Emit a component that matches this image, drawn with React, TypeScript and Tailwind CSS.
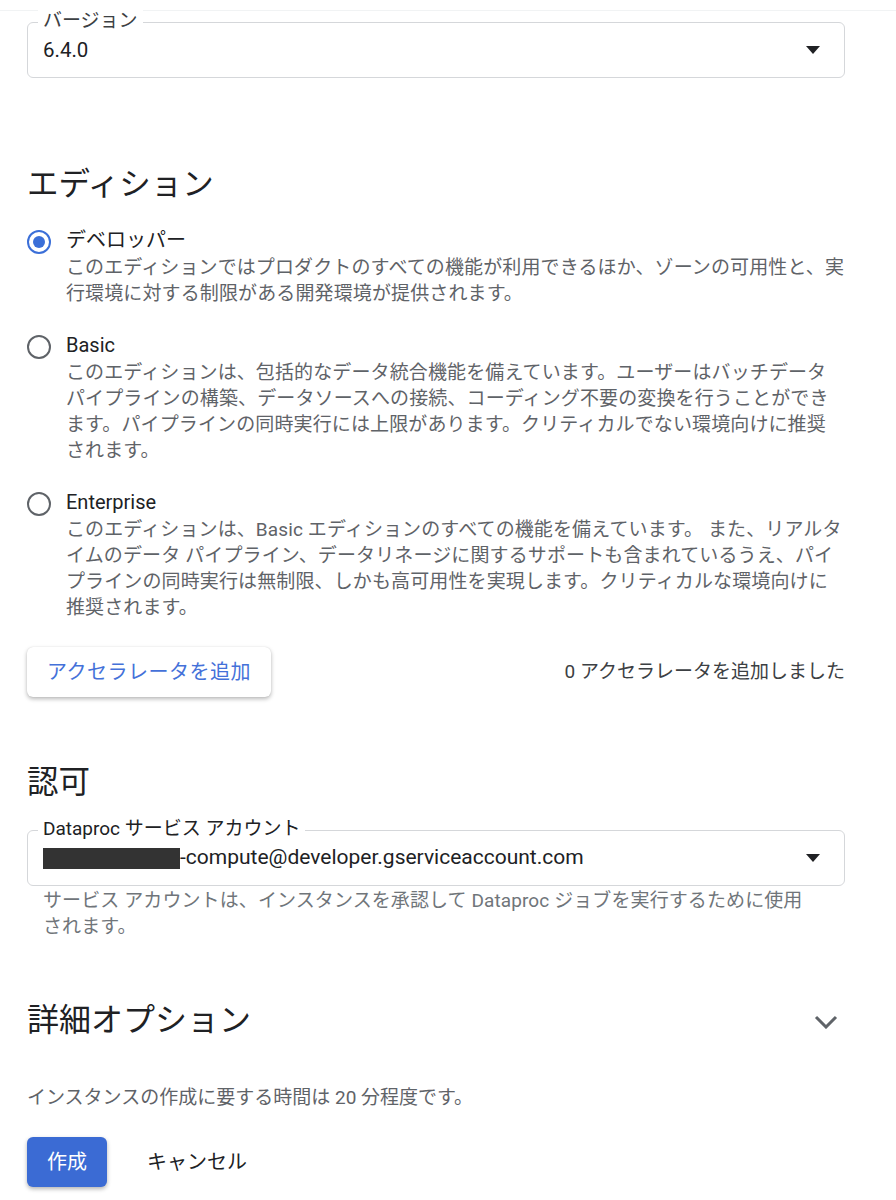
import React from "react";

const FONT = { fontFamily: 'Roboto, "Noto Sans CJK JP", sans-serif' };

function Radio({ checked }: { checked?: boolean }) {
  return (
    <div
      className={
        "w-[24px] h-[24px] rounded-full border-[2.5px] flex items-center justify-center shrink-0 " +
        (checked ? "border-[#3b6fd8]" : "border-[#5f6368]")
      }
    >
      {checked && <div className="w-[12px] h-[12px] rounded-full bg-[#3b6fd8]" />}
    </div>
  );
}

function Option({
  label,
  lines,
  checked,
  className,
}: {
  label: string;
  lines: string[];
  checked?: boolean;
  className?: string;
}) {
  return (
    <div className={"flex " + (className ?? "")}>
      <div className="w-[39px] shrink-0 h-[30px] flex items-center">
        <Radio checked={checked} />
      </div>
      <div className="flex-1">
        <div className="text-[20px] leading-[26px] text-[#202124]">{label}</div>
        <div className="mt-[2px] text-[19px] leading-[26px] tracking-[0.12px] text-[#5f6368] whitespace-nowrap">
          {lines.map((l, i) => (
            <div key={i}>{l}</div>
          ))}
        </div>
      </div>
    </div>
  );
}

function Triangle() {
  return (
    <svg width="14" height="8" viewBox="0 0 14 8" className="shrink-0">
      <path d="M0 0 L14 0 L7 8 Z" fill="#202124" />
    </svg>
  );
}

export default function App() {
  return (
    <div className="bg-white w-[896px] h-[1200px] overflow-hidden" style={FONT}>
      <div className="h-[11px] border-b border-[#f1f3f4]" />
      <div className="pl-[27px] pr-[51px]">
        {/* Version select */}
        <div className="relative mt-[11px] h-[56px] border border-[#d5d7da] rounded-[6px] flex items-center pl-[15px] pr-[24px] justify-between">
          <span className="absolute left-[10px] top-[-15px] bg-white px-[5px] text-[19px] leading-[26px] text-[#3c4043]">
            バージョン
          </span>
          <span className="text-[20.5px] text-[#202124]">6.4.0</span>
          <Triangle />
        </div>

        {/* Edition */}
        <h2 className="mt-[89px] text-[31.5px] leading-[36px] font-normal text-[#202124]">エディション</h2>

        <Option
          className="mt-[24px]"
          checked
          label="デベロッパー"
          lines={[
            "このエディションではプロダクトのすべての機能が利用できるほか、ゾーンの可用性と、実",
            "行環境に対する制限がある開発環境が提供されます。",
          ]}
        />
        <Option
          className="mt-[25px]"
          label="Basic"
          lines={[
            "このエディションは、包括的なデータ統合機能を備えています。ユーザーはバッチデータ",
            "パイプラインの構築、データソースへの接続、コーディング不要の変換を行うことができ",
            "ます。パイプラインの同時実行には上限があります。クリティカルでない環境向けに推奨",
            "されます。",
          ]}
        />
        <Option
          className="mt-[25px]"
          label="Enterprise"
          lines={[
            "このエディションは、Basic エディションのすべての機能を備えています。 また、リアルタ",
            "イムのデータ パイプライン、データリネージに関するサポートも含まれているうえ、パイ",
            "プラインの同時実行は無制限、しかも高可用性を実現します。クリティカルな環境向けに",
            "推奨されます。",
          ]}
        />

        {/* Accelerator */}
        <div className="mt-[26px] flex items-center justify-between">
          <button className="h-[50px] px-[20px] rounded-[6px] bg-white text-[#4471d9] text-[20px] tracking-[0.5px] shadow-[0_2px_4px_rgba(0,0,0,0.28),0_0_1px_rgba(0,0,0,0.15)]">
            アクセラレータを追加
          </button>
          <span className="text-[19px] text-[#3c4043]">0 アクセラレータを追加しました</span>
        </div>

        {/* Authorization */}
        <h2 className="mt-[68px] text-[31.5px] leading-[36px] font-normal text-[#202124]">認可</h2>
        <div className="relative mt-[29px] h-[56px] border border-[#d5d7da] rounded-[6px] flex items-center pl-[15px] pr-[24px] justify-between">
          <span className="absolute left-[10px] top-[-15px] bg-white px-[5px] text-[19px] leading-[26px] text-[#202124]">
            Dataproc サービス アカウント
          </span>
          <span className="flex items-center text-[21px] text-[#202124]">
            <span className="inline-block w-[137px] h-[21px] bg-[#333333]" />
            -compute@developer.gserviceaccount.com
          </span>
          <Triangle />
        </div>
        <div className="mt-[2px] pl-[16px] text-[19px] leading-[26px] tracking-[0.1px] text-[#70757a]">
          <div>サービス アカウントは、インスタンスを承認して Dataproc ジョブを実行するために使用</div>
          <div>されます。</div>
        </div>

        {/* Advanced options */}
        <div className="mt-[62px] flex items-center justify-between">
          <h2 className="text-[32px] leading-[36px] font-normal text-[#202124]">詳細オプション</h2>
          <svg width="24" height="14" viewBox="0 0 24 14" className="mr-[7px] mt-[4px]">
            <polyline points="2,2 12,12 22,2" fill="none" stroke="#5f6368" strokeWidth="3" />
          </svg>
        </div>

        <div className="mt-[47px] text-[19px] leading-[26px] text-[#5f6368]">
          インスタンスの作成に要する時間は 20 分程度です。
        </div>

        <div className="mt-[26px] flex items-center">
          <button className="h-[50px] px-[20px] rounded-[6px] bg-[#3b6bd4] text-white text-[20px] shadow-[0_2px_4px_rgba(0,0,0,0.3)]">
            作成
          </button>
          <button className="ml-[20px] h-[50px] px-[20px] text-[20px] text-[#202124]">キャンセル</button>
        </div>
      </div>
    </div>
  );
}
